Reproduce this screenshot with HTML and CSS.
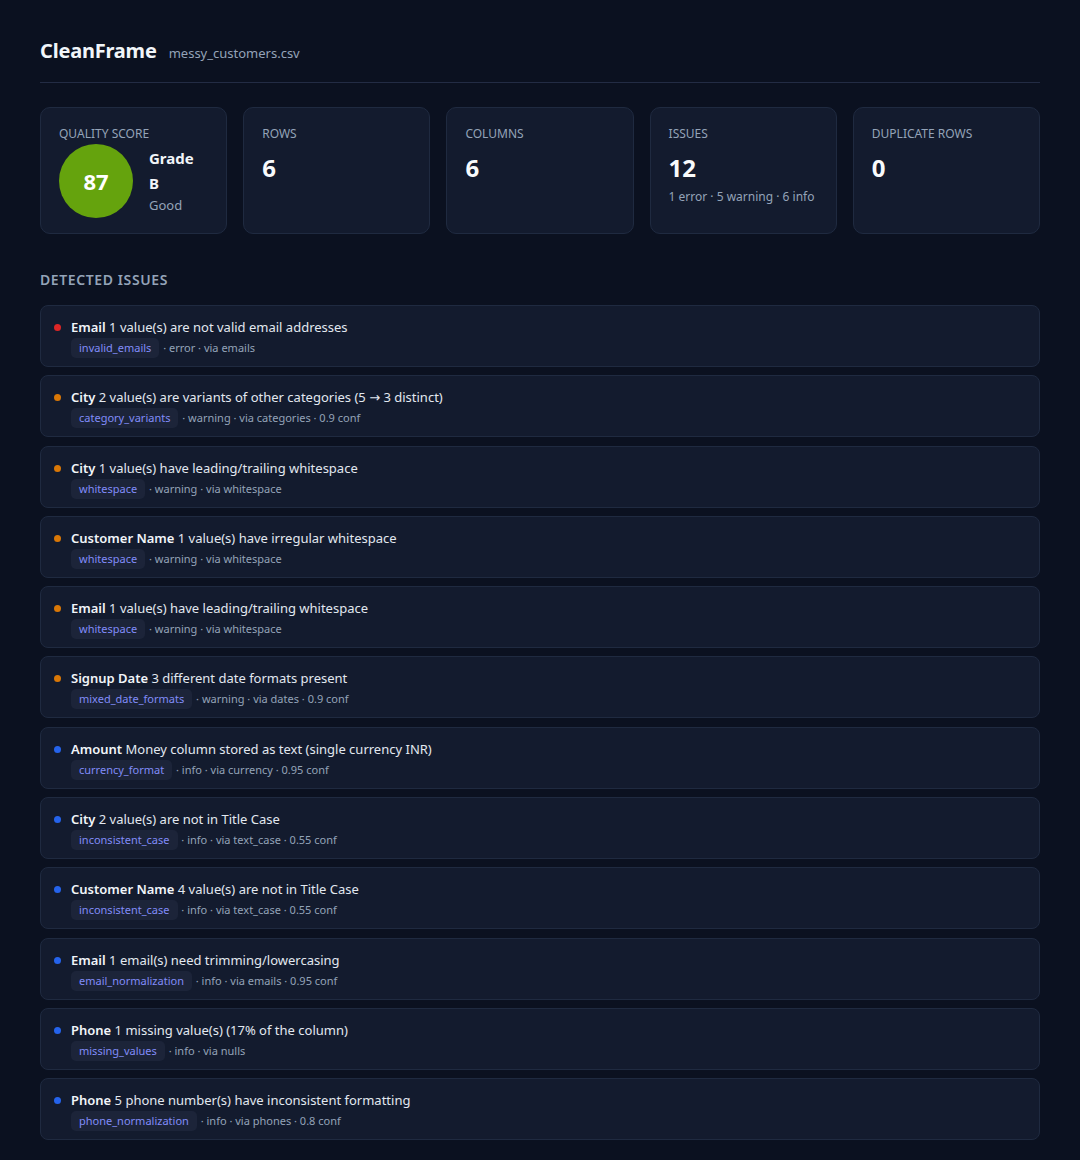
FILE: index.html
```html
<!DOCTYPE html>
<html lang="en">
<head>
<meta charset="utf-8">
<title>CleanFrame</title>
<link rel="stylesheet" href="styles.css">
</head>
<body>
<div class="page">
  <header class="header">
    <h1 class="brand">CleanFrame</h1>
    <span class="file">messy_customers.csv</span>
  </header>

  <section class="stats">
    <div class="card">
      <div class="label">QUALITY SCORE</div>
      <div class="score-row">
        <div class="score">87</div>
        <div class="grade">
          <div class="grade-title">Grade B</div>
          <div class="grade-sub">Good</div>
        </div>
      </div>
    </div>
    <div class="card">
      <div class="label">ROWS</div>
      <div class="value">6</div>
    </div>
    <div class="card">
      <div class="label">COLUMNS</div>
      <div class="value">6</div>
    </div>
    <div class="card">
      <div class="label">ISSUES</div>
      <div class="value">12</div>
      <div class="sub">1 error · 5 warning · 6 info</div>
    </div>
    <div class="card">
      <div class="label">DUPLICATE ROWS</div>
      <div class="value">0</div>
    </div>
  </section>

  <h2 class="section-title">DETECTED ISSUES</h2>

  <ul class="issues">
    <li class="issue"><span class="dot error"></span><div class="body"><div class="title"><b>Email</b> 1 value(s) are not valid email addresses</div><div class="meta"><span class="tag">invalid_emails</span> · error · via emails</div></div></li>
    <li class="issue"><span class="dot warning"></span><div class="body"><div class="title"><b>City</b> 2 value(s) are variants of other categories (5 → 3 distinct)</div><div class="meta"><span class="tag">category_variants</span> · warning · via categories · 0.9 conf</div></div></li>
    <li class="issue"><span class="dot warning"></span><div class="body"><div class="title"><b>City</b> 1 value(s) have leading/trailing whitespace</div><div class="meta"><span class="tag">whitespace</span> · warning · via whitespace</div></div></li>
    <li class="issue"><span class="dot warning"></span><div class="body"><div class="title"><b>Customer Name</b> 1 value(s) have irregular whitespace</div><div class="meta"><span class="tag">whitespace</span> · warning · via whitespace</div></div></li>
    <li class="issue"><span class="dot warning"></span><div class="body"><div class="title"><b>Email</b> 1 value(s) have leading/trailing whitespace</div><div class="meta"><span class="tag">whitespace</span> · warning · via whitespace</div></div></li>
    <li class="issue"><span class="dot warning"></span><div class="body"><div class="title"><b>Signup Date</b> 3 different date formats present</div><div class="meta"><span class="tag">mixed_date_formats</span> · warning · via dates · 0.9 conf</div></div></li>
    <li class="issue"><span class="dot info"></span><div class="body"><div class="title"><b>Amount</b> Money column stored as text (single currency INR)</div><div class="meta"><span class="tag">currency_format</span> · info · via currency · 0.95 conf</div></div></li>
    <li class="issue"><span class="dot info"></span><div class="body"><div class="title"><b>City</b> 2 value(s) are not in Title Case</div><div class="meta"><span class="tag">inconsistent_case</span> · info · via text_case · 0.55 conf</div></div></li>
    <li class="issue"><span class="dot info"></span><div class="body"><div class="title"><b>Customer Name</b> 4 value(s) are not in Title Case</div><div class="meta"><span class="tag">inconsistent_case</span> · info · via text_case · 0.55 conf</div></div></li>
    <li class="issue"><span class="dot info"></span><div class="body"><div class="title"><b>Email</b> 1 email(s) need trimming/lowercasing</div><div class="meta"><span class="tag">email_normalization</span> · info · via emails · 0.95 conf</div></div></li>
    <li class="issue"><span class="dot info"></span><div class="body"><div class="title"><b>Phone</b> 1 missing value(s) (17% of the column)</div><div class="meta"><span class="tag">missing_values</span> · info · via nulls</div></div></li>
    <li class="issue"><span class="dot info"></span><div class="body"><div class="title"><b>Phone</b> 5 phone number(s) have inconsistent formatting</div><div class="meta"><span class="tag">phone_normalization</span> · info · via phones · 0.8 conf</div></div></li>
  </ul>
</div>
</body>
</html>
```

FILE: styles.css
```css
* { box-sizing: border-box; }
html, body { margin: 0; padding: 0; }
body {
  background: #0b1120;
  color: #e2e8f0;
  font-family: "Noto Sans", "Open Sans", "DejaVu Sans", sans-serif;
}
.page {
  width: 1000px;
  margin: 0 40px;
  padding-top: 37px;
}
.header {
  display: flex;
  align-items: baseline;
  gap: 12px;
  padding-bottom: 18px;
  border-bottom: 1px solid #232c44;
}
.brand {
  margin: 0;
  font-size: 20px;
  font-weight: 700;
  color: #f1f5f9;
  letter-spacing: -0.2px;
}
.file {
  font-size: 13px;
  color: #94a3b8;
}
.stats {
  display: grid;
  grid-template-columns: repeat(5, 1fr);
  gap: 16px;
  margin-top: 24px;
}
.card {
  background: #131b2e;
  border: 1px solid #1f2a40;
  border-radius: 10px;
  height: 127px;
  padding: 18px 18px 0;
}
.label {
  font-size: 12px;
  color: #94a3b8;
  line-height: 16px;
}
.value {
  font-size: 24px;
  font-weight: 700;
  color: #f8fafc;
  line-height: 32px;
  margin-top: 10px;
}
.sub {
  font-size: 12px;
  color: #94a3b8;
  margin-top: 4px;
}
.score-row {
  display: flex;
  align-items: center;
  gap: 16px;
  margin-top: 2px;
}
.score {
  width: 74px;
  height: 74px;
  border-radius: 50%;
  background: #65a30d;
  color: #fff;
  font-size: 22px;
  font-weight: 700;
  display: flex;
  align-items: center;
  justify-content: center;
  flex-shrink: 0;
}
.grade { width: 50px; margin-top: -2px; }
.grade-title {
  font-size: 15px;
  font-weight: 700;
  color: #f1f5f9;
  line-height: 25px;
}
.grade-sub {
  font-size: 13px;
  color: #94a3b8;
  line-height: 18px;
}
.section-title {
  margin: 36px 0 16px;
  font-size: 14px;
  font-weight: 600;
  color: #94a3b8;
  letter-spacing: 0.6px;
}
.issues {
  list-style: none;
  margin: 0;
  padding: 0;
  display: flex;
  flex-direction: column;
  gap: 8.3px;
}
.issue {
  display: flex;
  align-items: flex-start;
  gap: 10px;
  background: #131b2e;
  border: 1px solid #1f2a40;
  border-radius: 8px;
  height: 62px;
  padding: 12px 13px 0;
}
.dot {
  width: 7px;
  height: 7px;
  border-radius: 50%;
  margin-top: 6px;
  flex-shrink: 0;
}
.dot.error { background: #dc2626; }
.dot.warning { background: #d97706; }
.dot.info { background: #2563eb; }
.title {
  font-size: 13px;
  line-height: 18px;
  color: #e2e8f0;
}
.title b { font-weight: 600; color: #f1f5f9; }
.meta {
  font-size: 11px;
  color: #94a3b8;
  margin-top: 2px;
  line-height: 20px;
}
.tag {
  display: inline-block;
  background: #1c2439;
  color: #818cf8;
  border-radius: 5px;
  padding: 0 8px;
  margin-right: 1px;
}
```
